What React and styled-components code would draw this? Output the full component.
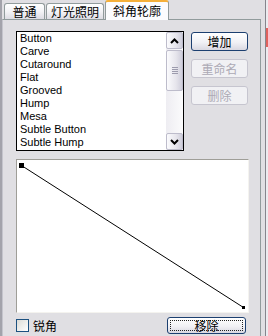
import React from "react";
import styled, { createGlobalStyle } from "styled-components";

const cjk = `"Noto Sans CJK SC", "Liberation Sans", sans-serif`;

const GlobalStyle = createGlobalStyle`
  html, body { margin: 0; padding: 0; background: #e0dfe3; }
  body { font-family: "Liberation Sans", Arial, sans-serif; }
`;

const Frame = styled.div`
  width: 268px;
  height: 336px;
  display: flex;
  overflow: hidden;
  background: #e0dfe3;
`;

const LeftEdge = styled.div`
  width: 2px;
  flex: none;
  background: #a3a3ab;
`;

const Main = styled.div`
  width: 259px;
  flex: none;
  display: flex;
  flex-direction: column;
`;

const RightEdge = styled.div`
  width: 7px;
  flex: none;
  display: flex;
`;

const Gutter = styled.div`
  width: 4px;
  background: #e0dfe3;
`;

const EdgeLine = styled.div`
  width: 1px;
  background: #85858d;
`;

const EdgeStrip = styled.div`
  width: 2px;
  background: #ecebef;
`;

const RedMark = styled.div`
  margin-top: 28px;
  height: 19px;
  background: #e0625e;
`;

const TabStrip = styled.div`
  height: 19px;
  display: flex;
  align-items: flex-end;
  padding-left: 2px;
  gap: 1px;
`;

const Tab = styled.div`
  box-sizing: border-box;
  width: ${(p) => p.$w}px;
  height: ${(p) => (p.$active ? 20 : 16)}px;
  margin-bottom: ${(p) => (p.$active ? -1 : 0)}px;
  position: relative;
  z-index: ${(p) => (p.$active ? 1 : 0)};
  border: 1px solid #919b9c;
  border-bottom: none;
  border-top: ${(p) => (p.$active ? "2px solid #f5b03a" : "1px solid #919b9c")};
  border-radius: 3px 3px 0 0;
  background: ${(p) =>
    p.$active ? "#fcfcfe" : "linear-gradient(#ffffff, #f3f3f6 50%, #dddce3)"};
  font: 12px/1 ${cjk};
  color: #000;
  display: flex;
  align-items: center;
  justify-content: center;
`;

const Page = styled.div`
  flex: 1;
  border: 1px solid #919b9c;
  border-left-color: #c4c4cc;
  border-bottom: none;
  background: #e0dfe3;
  padding: 11px 11px 0 13px;
  display: flex;
  flex-direction: column;
`;

const TopRow = styled.div`
  display: flex;
  gap: 7px;
`;

const ListBox = styled.div`
  box-sizing: border-box;
  width: 168px;
  height: 120px;
  border: 1px solid #000;
  background: #fff;
  display: flex;
`;

const Items = styled.div`
  flex: 1;
  overflow: hidden;
  padding-left: 3px;
`;

const Item = styled.div`
  height: 13px;
  font-size: 11px;
  line-height: 13px;
  color: #000;
  white-space: nowrap;
`;

const ScrollBar = styled.div`
  width: 17px;
  display: flex;
  flex-direction: column;
  background: linear-gradient(90deg, #eeedf2, #fbfbfc);
`;

const ScrollBtn = styled.div`
  box-sizing: border-box;
  height: 17px;
  border: 1px solid #bdbccb;
  border-radius: 2px;
  background: linear-gradient(90deg, #fbfbfd, #e6e5ec 60%, #cfcedb);
  display: flex;
  align-items: center;
  justify-content: center;
`;

const Thumb = styled(ScrollBtn)`
  height: 41px;
  margin-top: 1px;
  flex-direction: column;
  gap: 1px;
`;

const Grip = styled.div`
  width: 6px;
  height: 1px;
  background: #9c9bad;
`;

const Track = styled.div`
  flex: 1;
`;

const ButtonColumn = styled.div`
  display: flex;
  flex-direction: column;
  gap: 8px;
  padding-top: 1px;
`;

const Btn = styled.div`
  box-sizing: border-box;
  width: ${(p) => p.$w}px;
  height: ${(p) => p.$h}px;
  border: 1px solid ${(p) => (p.$disabled ? "#c6c5cf" : "#1c3f70")};
  border-radius: 3px;
  background: ${(p) =>
    p.$disabled ? "#f1f1f4" : "linear-gradient(#ffffff, #f1f1f5 55%, #d9d8e1)"};
  color: ${(p) => (p.$disabled ? "#aca9b4" : "#000")};
  font: 12px/1 ${cjk};
  display: flex;
  align-items: center;
  justify-content: center;
`;

const FocusRing = styled.div`
  flex: 1;
  align-self: stretch;
  margin: 2px;
  border: 1px dotted #222;
  display: flex;
  align-items: center;
  justify-content: center;
`;

const Preview = styled.div`
  box-sizing: border-box;
  margin-top: 8px;
  width: 233px;
  height: 154px;
  background: #fff;
  border: 1px solid;
  border-color: #9f9e98 #f4f3ef #f4f3ef #9f9e98;
  display: flex;
`;

const BottomRow = styled.div`
  margin-top: 4px;
  height: 17px;
  display: flex;
  align-items: center;
  justify-content: space-between;
  padding-right: 3px;
`;

const CheckLabel = styled.label`
  display: flex;
  align-items: center;
  gap: 4px;
  font: 12px/1 ${cjk};
  color: #000;
`;

const CheckBox = styled.div`
  box-sizing: border-box;
  width: 13px;
  height: 13px;
  border: 1px solid #1c5180;
  background: linear-gradient(135deg, #dcdcd7, #ffffff);
`;

const Chevron = ({ up }) => (
  <svg width="9" height="6" viewBox="0 0 9 6">
    <path
      d={up ? "M1 5 L4.5 1.5 L8 5" : "M1 1 L4.5 4.5 L8 1"}
      fill="none"
      stroke="#000"
      strokeWidth="2"
    />
  </svg>
);

const profiles = [
  "Button",
  "Carve",
  "Cutaround",
  "Flat",
  "Grooved",
  "Hump",
  "Mesa",
  "Subtle Button",
  "Subtle Hump",
];

export default function App() {
  return (
    <>
      <GlobalStyle />
      <Frame>
        <LeftEdge />
        <Main>
          <TabStrip>
            <Tab $w={41}>普通</Tab>
            <Tab $w={58}>灯光照明</Tab>
            <Tab $w={64} $active>
              斜角轮廓
            </Tab>
          </TabStrip>
          <Page>
            <TopRow>
              <ListBox>
                <Items>
                  {profiles.map((p) => (
                    <Item key={p}>{p}</Item>
                  ))}
                </Items>
                <ScrollBar>
                  <ScrollBtn>
                    <Chevron up />
                  </ScrollBtn>
                  <Thumb>
                    <Grip />
                    <Grip />
                    <Grip />
                    <Grip />
                  </Thumb>
                  <Track />
                  <ScrollBtn>
                    <Chevron />
                  </ScrollBtn>
                </ScrollBar>
              </ListBox>
              <ButtonColumn>
                <Btn $w={57} $h={19}>增加</Btn>
                <Btn $w={57} $h={19} $disabled>
                  重命名
                </Btn>
                <Btn $w={57} $h={19} $disabled>
                  删除
                </Btn>
              </ButtonColumn>
            </TopRow>
            <Preview>
              <svg width="231" height="152">
                <line x1="4.5" y1="5.5" x2="226.5" y2="147.5" stroke="#000" strokeWidth="1" />
                <rect x="2" y="3" width="5" height="5" fill="#000" />
                <rect x="225" y="146" width="3" height="3" fill="#000" />
              </svg>
            </Preview>
            <BottomRow>
              <CheckLabel>
                <CheckBox />
                锐角
              </CheckLabel>
              <Btn $w={79} $h={17}>
                <FocusRing>移除</FocusRing>
              </Btn>
            </BottomRow>
          </Page>
        </Main>
        <RightEdge>
          <Gutter />
          <EdgeLine />
          <EdgeStrip>
            <RedMark />
          </EdgeStrip>
        </RightEdge>
      </Frame>
    </>
  );
}
